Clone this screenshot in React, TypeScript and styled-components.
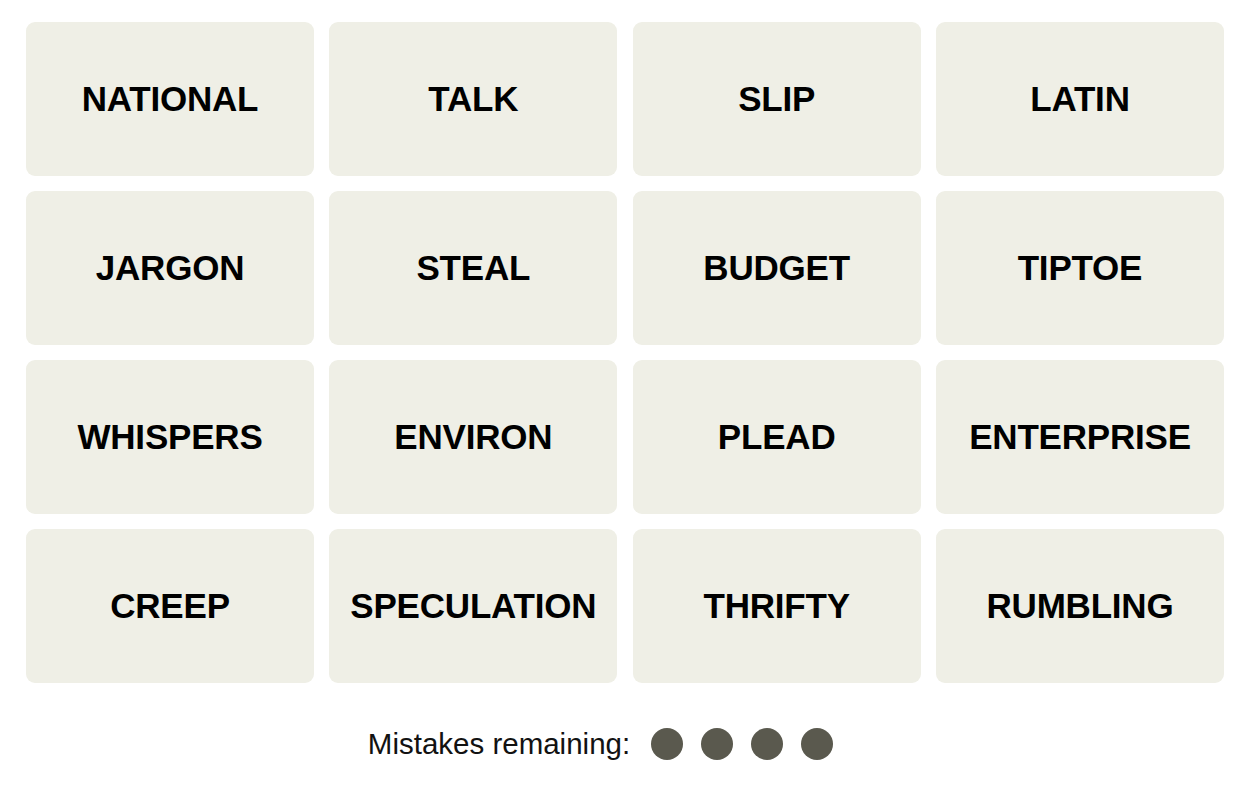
import React from "react";
import styled, { createGlobalStyle } from "styled-components";

const Global = createGlobalStyle`
  html, body { margin: 0; padding: 0; background: #ffffff; }
  body { font-family: "Liberation Sans", Arial, sans-serif; }
`;

const Page = styled.div`
  width: 1250px;
  height: 787px;
  padding: 22px 0 0 26px;
  box-sizing: border-box;
`;

const Grid = styled.div`
  display: grid;
  width: 1198px;
  grid-template-columns: repeat(4, 1fr);
  grid-auto-rows: 154px;
  column-gap: 15.3px;
  row-gap: 15px;
`;

const Tile = styled.button`
  border: none;
  margin: 0;
  padding: 0;
  background: #efefe6;
  border-radius: 9px;
  display: flex;
  align-items: center;
  justify-content: center;
  font-family: "Liberation Sans", Arial, sans-serif;
  font-weight: 700;
  font-size: 35px;
  letter-spacing: -0.2px;
  color: #000000;
  text-transform: uppercase;
`;

const Footer = styled.div`
  display: flex;
  align-items: center;
  justify-content: center;
  width: 1198px;
  padding-right: 49px;
  box-sizing: border-box;
  margin-top: 45px;
  height: 32px;
`;

const Label = styled.span`
  font-family: "Liberation Sans", Arial, sans-serif;
  font-size: 29.5px;
  color: #121212;
  margin-right: 21px;
  line-height: 1;
`;

const Dots = styled.div`
  display: flex;
  gap: 18px;
`;

const Dot = styled.span`
  width: 32px;
  height: 32px;
  border-radius: 50%;
  background: #5a594e;
  display: block;
`;

const words = [
  "NATIONAL", "TALK", "SLIP", "LATIN",
  "JARGON", "STEAL", "BUDGET", "TIPTOE",
  "WHISPERS", "ENVIRON", "PLEAD", "ENTERPRISE",
  "CREEP", "SPECULATION", "THRIFTY", "RUMBLING",
];

export default function App() {
  return (
    <>
      <Global />
      <Page>
        <Grid>
          {words.map((w) => (
            <Tile key={w}>{w}</Tile>
          ))}
        </Grid>
        <Footer>
          <Label>Mistakes remaining:</Label>
          <Dots>
            {[0, 1, 2, 3].map((i) => (
              <Dot key={i} />
            ))}
          </Dots>
        </Footer>
      </Page>
    </>
  );
}
